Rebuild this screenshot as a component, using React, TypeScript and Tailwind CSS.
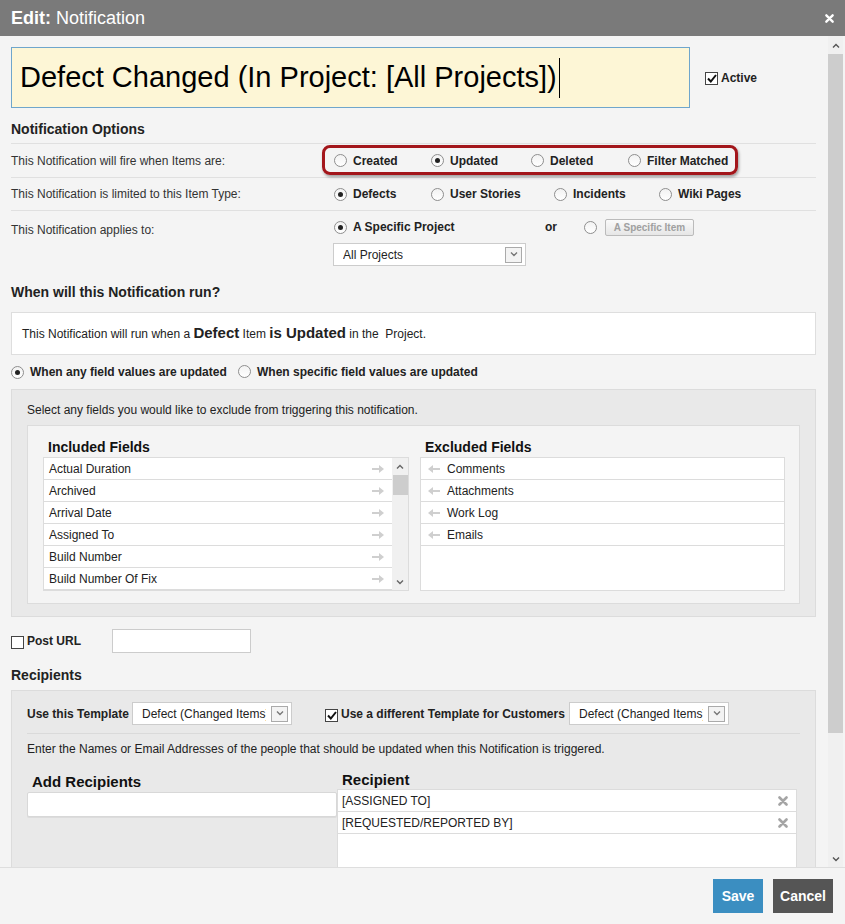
import React from "react";

const narrow = "font-['Liberation_Sans_Narrow','Arial_Narrow','Liberation_Sans',sans-serif]";

const Radio: React.FC<{ checked?: boolean; label?: string; w?: string; bold?: boolean }> = ({ checked, label, w, bold = true }) => (
  <span className={`inline-flex items-center gap-[6px] ${w ?? ""}`}>
    <span className="ml-px flex h-[13px] w-[13px] shrink-0 items-center justify-center rounded-full border border-[#8e8e8e] bg-gradient-to-b from-[#f2f2f2] to-white">
      {checked && <span className="h-[5px] w-[5px] rounded-full bg-[#222]" />}
    </span>
    {label && <span className={`${bold ? "font-bold" : ""} text-[12px] text-[#222]`}>{label}</span>}
  </span>
);

const Check: React.FC<{ checked?: boolean }> = ({ checked }) => (
  <span className="flex h-[13px] w-[13px] shrink-0 items-center justify-center border border-[#444] bg-white">
    {checked && (
      <svg width="10" height="9" viewBox="0 0 10 9">
        <path d="M1 4.5 L3.8 7.5 L9 1" stroke="#111" strokeWidth="2" fill="none" />
      </svg>
    )}
  </span>
);

const Chevron: React.FC<{ up?: boolean; color?: string }> = ({ up, color = "#555" }) => (
  <svg width="8" height="5" viewBox="0 0 8 5">
    <path d={up ? "M1 4.5 L4 1.5 L7 4.5" : "M1 0.5 L4 3.5 L7 0.5"} stroke={color} strokeWidth="1.4" fill="none" />
  </svg>
);

const Select: React.FC<{ value: string; w: string; tw?: string }> = ({ value, w, tw }) => (
  <div className={`flex h-[23px] ${w} items-center justify-between border border-[#ccc] bg-white pl-[9px] pr-[3px]`}>
    <span className={`overflow-hidden whitespace-nowrap text-[12px] text-[#222] ${tw ?? ""}`}>{value}</span>
    <span className="flex h-[16px] w-[17px] shrink-0 items-center justify-center border border-[#aaa] bg-[#f3f3f3]">
      <Chevron color="#777" />
    </span>
  </div>
);

const ArrowRight = () => (
  <svg width="12" height="8" viewBox="0 0 12 8">
    <path d="M0 3 H7 V0 L12 4 L7 8 V5 H0 Z" fill="#cfcfcf" />
  </svg>
);

const ArrowLeft = () => (
  <svg width="12" height="8" viewBox="0 0 12 8">
    <path d="M12 3 H5 V0 L0 4 L5 8 V5 H12 Z" fill="#cfcfcf" />
  </svg>
);

const XIcon: React.FC<{ color: string; size?: number }> = ({ color, size = 10 }) => (
  <svg width={size} height={size} viewBox="0 0 10 10">
    <path d="M1.5 1.5 L8.5 8.5 M8.5 1.5 L1.5 8.5" stroke={color} strokeWidth="2.6" strokeLinecap="round" />
  </svg>
);

const included = ["Actual Duration", "Archived", "Arrival Date", "Assigned To", "Build Number", "Build Number Of Fix"];
const excluded = ["Comments", "Attachments", "Work Log", "Emails"];

export default function App() {
  return (
    <div className="flex h-[924px] w-[845px] flex-col overflow-hidden bg-[#f4f4f4] font-['Liberation_Sans',Arial,sans-serif] text-[12px] text-[#333]">
      {/* title bar */}
      <div className="flex h-[36px] shrink-0 items-center justify-between bg-[#7a7a7a] pl-[11px] pr-[11px] text-white">
        <div className={`${narrow} text-[18px]`}>
          <span className="font-bold">Edit:</span> Notification
        </div>
        <XIcon color="#fff" size={9} />
      </div>

      {/* body */}
      <div className="flex min-h-0 flex-1">
        <div className="min-w-0 flex-1 overflow-hidden pl-[11px] pr-[12px]">
          {/* name */}
          <div className="mt-[11px] flex items-center">
            <div className="flex h-[61px] w-[679px] items-center border border-[#6fa6cc] bg-[#fdf6d6] pl-[8px]">
              <span className="text-[29px] leading-none text-black">Defect Changed (In Project: [All Projects])</span>
              <span className="ml-[2px] h-[40px] w-px bg-black" />
            </div>
            <label className="ml-[15px] mt-[1px] flex items-center gap-[3px]">
              <Check checked />
              <span className="-mt-[1px] font-bold text-[#222]">Active</span>
            </label>
          </div>

          <div className="mt-[13px] text-[14px] font-bold leading-[17px] text-[#222]">Notification Options</div>

          <div className="mt-[5px] border-t border-[#e0e0e0]">
            <div className="relative flex h-[33px] items-center">
              <span className="w-[322px] text-[#333]">This Notification will fire when Items are:</span>
              <div className="flex items-center">
                <Radio label="Created" w="w-[97px]" />
                <Radio label="Updated" checked w="w-[100px]" />
                <Radio label="Deleted" w="w-[97px]" />
                <Radio label="Filter Matched" />
              </div>
              <div className="pointer-events-none absolute left-[311px] top-px h-[30px] w-[416px] rounded-[8px] border-[3px] border-[#a3161b] shadow-[1px_2px_3px_rgba(0,0,0,0.35)]" />
            </div>
            <div className="flex h-[33px] items-center border-t border-[#e0e0e0]">
              <span className="w-[322px] text-[#333]">This Notification is limited to this Item Type:</span>
              <div className="flex items-center">
                <Radio label="Defects" checked w="w-[97px]" />
                <Radio label="User Stories" w="w-[123px]" />
                <Radio label="Incidents" w="w-[105px]" />
                <Radio label="Wiki Pages" />
              </div>
            </div>
            <div className="flex border-t border-[#e0e0e0]">
              <span className="mt-[10px] w-[322px] text-[#333]">This Notification applies to:</span>
              <div className="flex flex-col">
                <div className="flex h-[32px] items-center">
                  <Radio label="A Specific Project" checked w="w-[212px]" />
                  <span className="w-[38px] font-bold text-[#222]">or</span>
                  <Radio />
                  <span className="ml-[8px] mt-[1px] flex h-[17px] w-[89px] items-center justify-center rounded-[2px] border border-[#bbb] bg-gradient-to-b from-[#fafafa] to-[#e6e6e6] text-[10px] font-bold text-[#a0a0a0]">
                    A Specific Item
                  </span>
                </div>
                <Select value="All Projects" w="w-[193px]" />
              </div>
            </div>
          </div>

          <div className="mt-[18px] text-[14px] font-bold leading-[17px] text-[#222]">
            <span className={narrow}>When will this Notification run?</span>
          </div>

          <div className={`mt-[11px] flex h-[43px] items-center border border-[#dedede] bg-white pl-[10px] text-[12px] text-[#222] ${narrow}`}>
            This Notification will run when a&nbsp;<b className="text-[15px]">Defect</b>&nbsp;Item&nbsp;<b className="text-[15px]">is Updated</b>&nbsp;in the&nbsp; Project.
          </div>

          <div className={`mt-[8px] flex h-[17px] items-center ${narrow}`}>
            <span className="-ml-px">
              <Radio label="When any field values are updated" checked w="w-[227px]" />
            </span>
            <Radio label="When specific field values are updated" />
          </div>

          <div className="mt-[9px] border border-[#dcdcdc] bg-[#e9e9e9] px-[15px] pb-[12px] pt-[13px]">
            <div className={`text-[12px] leading-[14px] text-[#222] ${narrow}`}>Select any fields you would like to exclude from triggering this notification.</div>
            <div className="mt-[8px] flex gap-[11px] border border-[#dcdcdc] bg-[#f4f4f4] pb-[12px] pl-[15px] pr-[14px] pt-[13px]">
              <div className="w-[366px]">
                <div className="pl-[5px] text-[14px] font-bold leading-[17px] text-[#111]">Included Fields</div>
                <div className="mt-[1px] flex h-[134px] border border-[#dcdcdc] bg-white">
                  <div className="flex-1">
                    {included.map((f) => (
                      <div key={f} className="flex h-[22px] items-center justify-between border-b border-[#dcdcdc] pl-[5px] pr-[8px] text-[12px] text-[#222]">
                        <span>{f}</span>
                        <ArrowRight />
                      </div>
                    ))}
                  </div>
                  <div className="flex w-[16px] flex-col items-center bg-[#f0f0f0]">
                    <div className="flex h-[17px] items-center"><Chevron up color="#666" /></div>
                    <div className="h-[20px] w-[15px] bg-[#cdcdcd]" />
                    <div className="flex-1" />
                    <div className="flex h-[16px] items-center"><Chevron color="#666" /></div>
                  </div>
                </div>
              </div>
              <div className="flex-1">
                <div className="pl-[5px] text-[14px] font-bold leading-[17px] text-[#111]">Excluded Fields</div>
                <div className="mt-[1px] h-[134px] border border-[#dcdcdc] bg-white">
                  {excluded.map((f) => (
                    <div key={f} className="flex h-[22px] items-center gap-[7px] border-b border-[#dcdcdc] pl-[7px] text-[12px] text-[#222]">
                      <ArrowLeft />
                      <span>{f}</span>
                    </div>
                  ))}
                </div>
              </div>
            </div>
          </div>

          <div className="mt-[12px] flex items-center">
            <span className="mt-[2px]"><Check /></span>
            <span className="ml-[3px] w-[85px] font-bold text-[#222]">Post URL</span>
            <div className="h-[24px] w-[139px] border border-[#ccc] bg-white" />
          </div>

          <div className="mt-[14px] text-[14px] font-bold leading-[17px] text-[#222]">Recipients</div>

          <div className="mt-[6px] h-[200px] border border-[#dcdcdc] bg-[#e9e9e9] pl-[15px] pr-[15px] pt-[11px]">
            <div className="flex items-center border-b border-[#dadada] pb-[8px]">
              <span className="w-[105px] font-bold text-[#222]">Use this Template</span>
              <Select value="Defect (Changed Items)" w="w-[160px]" tw="w-[124px]" />
              <span className="ml-[33px] mt-[3px]"><Check checked /></span>
              <span className="ml-[3px] w-[228px] font-bold text-[#222]">Use a different Template for Customers</span>
              <Select value="Defect (Changed Items)" w="w-[160px]" tw="w-[124px]" />
            </div>
            <div className="mt-[8px] text-[12px] leading-[14px] text-[#222]">Enter the Names or Email Addresses of the people that should be updated when this Notification is triggered.</div>
            <div className={`mt-[17px] flex ${narrow}`}>
              <div className="w-[310px]">
                <div className="pl-[5px] text-[15px] font-bold leading-[17px] text-[#111]">Add Recipients</div>
                <div className="mt-[2px] h-[25px] rounded-[2px] border border-[#d8d8d8] bg-white shadow-[0_1px_0_#dcdcdc]" />
              </div>
              <div className="-mt-[2px] w-[460px]">
                <div className="pl-[5px] text-[15px] font-bold leading-[17px] text-[#111]">Recipient</div>
                <div className="mt-[1px] h-[100px] border border-[#dcdcdc] bg-white">
                  {["[ASSIGNED TO]", "[REQUESTED/REPORTED BY]"].map((r) => (
                    <div key={r} className="flex h-[22px] items-center justify-between border-b border-[#dcdcdc] pl-[4px] pr-[8px] text-[12px] text-[#222]">
                      <span>{r}</span>
                      <XIcon color="#a5a5a5" />
                    </div>
                  ))}
                </div>
              </div>
            </div>
          </div>
        </div>

        {/* page scrollbar */}
        <div className="mr-[2px] flex w-[15px] flex-col items-center bg-[#f0f0f0]">
          <div className="flex h-[18px] items-center"><Chevron up color="#555" /></div>
          <div className="h-[679px] w-[15px] bg-[#cdcdcd]" />
          <div className="flex-1" />
          <div className="flex h-[16px] items-center"><Chevron color="#555" /></div>
        </div>
      </div>

      {/* footer */}
      <div className="flex h-[57px] shrink-0 items-start justify-end gap-[10px] border-t border-[#dedede] bg-[#f4f4f4] pr-[12px] pt-[11px]">
        <button className={`h-[34px] w-[50px] bg-[#3b8ec1] text-[14px] font-bold text-white ${narrow}`}>Save</button>
        <button className={`h-[34px] w-[60px] bg-[#555] text-[14px] font-bold text-white ${narrow}`}>Cancel</button>
      </div>
    </div>
  );
}
